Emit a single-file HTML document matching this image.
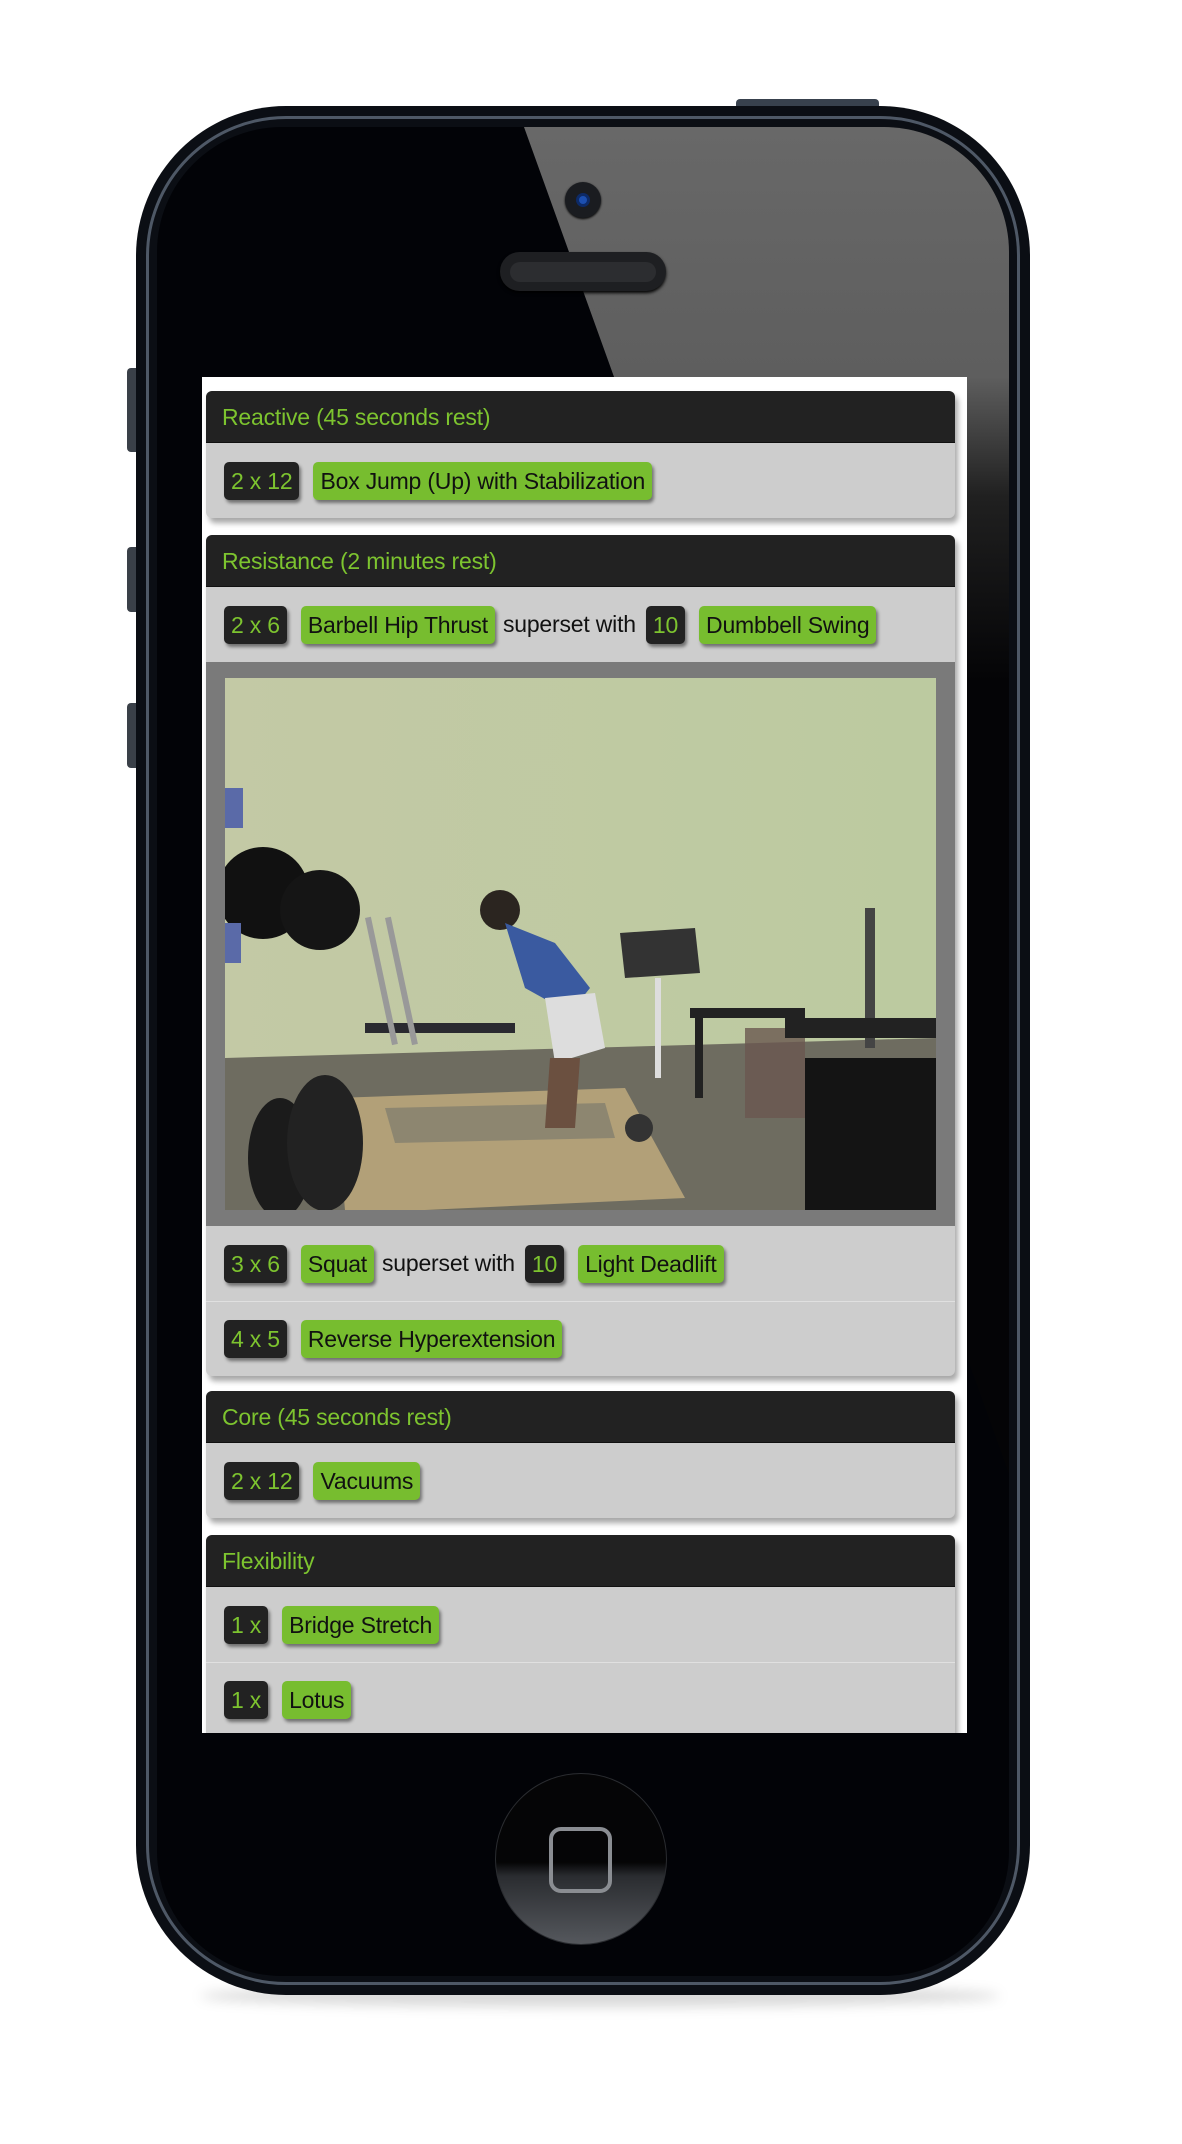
<!DOCTYPE html>
<html><head><meta charset="utf-8"><style>
*{margin:0;padding:0;box-sizing:border-box}
body{width:1182px;height:2144px;background:#fff;position:relative;overflow:hidden;font-family:"Liberation Sans",Arial,sans-serif}
.abs{position:absolute}
.card{position:absolute;left:206px;width:749px;background:#cdcdcd;border-radius:6px;box-shadow:3px 5px 6px rgba(0,0,0,.35);overflow:hidden}
.hd{height:52px;background:#222;color:#7dc42f;font-size:23px;line-height:52px;padding-left:16px;border-bottom:1px solid #111;letter-spacing:-0.2px}
.row{position:relative;height:75px;border-top:1px solid #e0e0e0;display:flex;align-items:center;padding-left:18px;font-size:23px;color:#111;letter-spacing:-0.2px}
.row.first{border-top:none}
.b{height:38px;line-height:38px;border-radius:5px;padding:0 7px;box-shadow:2px 3px 3px rgba(0,0,0,.45);margin-right:14px;white-space:nowrap}
.d{background:#222;color:#7dc42f}
.g{background:#77bd2f;color:#111}
.t{margin-right:10px;margin-left:-6px}
</style></head><body>
<div class="abs" style="left:127px;top:368px;width:12px;height:84px;background:#3a4048;border-radius:4px 0 0 4px"></div>
<div class="abs" style="left:127px;top:547px;width:12px;height:65px;background:#3a4048;border-radius:4px 0 0 4px"></div>
<div class="abs" style="left:127px;top:703px;width:12px;height:65px;background:#3a4048;border-radius:4px 0 0 4px"></div>
<div class="abs" style="left:736px;top:99px;width:143px;height:12px;background:#38414d;border-radius:4px 4px 0 0"></div>
<div class="abs" style="left:200px;top:1985px;width:800px;height:22px;border-radius:50%;background:rgba(0,0,0,.15);filter:blur(6px)"></div>
<div class="abs" style="left:136px;top:106px;width:894px;height:1889px;background:#0b0e14;border-radius:150px"></div>
<div class="abs" style="left:146px;top:116px;width:874px;height:1869px;border:3px solid #4e5866;border-radius:140px"></div>
<div class="abs" style="left:157px;top:127px;width:852px;height:1849px;background:#020307;border-radius:125px;overflow:hidden">
  <svg width="852" height="1849" style="position:absolute;left:0;top:0">
    <defs><linearGradient id="gg" x1="0" y1="0" x2="0" y2="1"><stop offset="0" stop-color="#686868"/><stop offset="0.135" stop-color="#5e5e5e"/><stop offset="0.2" stop-color="#202020"/><stop offset="0.3" stop-color="#040406"/></linearGradient></defs>
    <polygon points="367,0 852,0 852,1849 1033,1849" fill="url(#gg)"/>
  </svg>
</div>
<div class="abs" style="left:565px;top:182px;width:36px;height:36px;border-radius:50%;background:#1a1c20;box-shadow:0 1px 2px #000"></div>
<div class="abs" style="left:576px;top:193px;width:14px;height:14px;border-radius:50%;background:#1c4fb0;border:3px solid #0d2a66"></div>
<div class="abs" style="left:500px;top:252px;width:166px;height:39px;border-radius:20px;background:#1e1f22;box-shadow:0 2px 3px #000"></div>
<div class="abs" style="left:510px;top:262px;width:146px;height:20px;border-radius:10px;background:#2c2d30"></div>
<div class="abs" style="left:202px;top:377px;width:765px;height:1356px;background:#fff"></div>
<div class="abs" style="left:0;top:0;width:1182px;height:1733px;overflow:hidden;clip-path:inset(377px 215px 0 202px)">
<div class="card" style="top:391px">
  <div class="hd">Reactive (45 seconds rest)</div>
  <div class="row first"><span class="b d">2 x 12</span><span class="b g">Box Jump (Up) with Stabilization</span></div>
</div>
<div class="card" style="top:535px">
  <div class="hd">Resistance (2 minutes rest)</div>
  <div class="row first"><span class="b d">2 x 6</span><span class="b g">Barbell Hip Thrust</span><span class="t">superset with</span><span class="b d">10</span><span class="b g">Dumbbell Swing</span></div>
  <div style="height:564px;background:#7a7a7a;position:relative">
    <svg class="abs" style="left:19px;top:16px" width="711" height="532" viewBox="0 0 711 532">
      <defs><linearGradient id="w" x1="0" y1="0" x2="1" y2="0"><stop offset="0" stop-color="#c3c9a5"/><stop offset="1" stop-color="#bccaa0"/></linearGradient></defs>
      <rect width="711" height="532" fill="url(#w)"/>
      <polygon points="0,380 711,360 711,532 0,532" fill="#6e6c60"/>
      <polygon points="110,420 400,410 460,520 200,532 120,532" fill="#b2a078"/>
      <polygon points="160,430 380,425 390,460 170,465" fill="#8d8670"/>
      <rect x="140" y="345" width="150" height="10" fill="#2a2a30"/>
      <rect x="140" y="240" width="6" height="130" fill="#999" transform="rotate(-12 140 240)"/>
      <rect x="160" y="240" width="6" height="130" fill="#999" transform="rotate(-12 160 240)"/>
      <circle cx="38" cy="215" r="46" fill="#111"/>
      <circle cx="95" cy="232" r="40" fill="#151515"/>
      <rect x="0" y="110" width="18" height="40" fill="#5a6aa8"/>
      <rect x="0" y="245" width="16" height="40" fill="#5a6aa8"/>
      <ellipse cx="55" cy="480" rx="32" ry="60" fill="#1b1b1b"/>
      <ellipse cx="100" cy="465" rx="38" ry="68" fill="#222"/>
      <circle cx="275" cy="232" r="20" fill="#2b2520"/>
      <polygon points="280,245 330,265 365,310 345,335 300,310" fill="#3a5aa0"/>
      <polygon points="320,320 370,315 380,370 330,385" fill="#ddd"/>
      <polygon points="325,380 355,380 350,450 320,450" fill="#6b5040"/>
      <polygon points="395,255 470,250 475,295 400,300" fill="#333"/>
      <rect x="430" y="300" width="6" height="100" fill="#ddd"/>
      <rect x="465" y="330" width="115" height="10" fill="#222"/>
      <rect x="470" y="340" width="8" height="80" fill="#222"/>
      <rect x="520" y="350" width="60" height="90" fill="#6a5850" opacity=".8"/>
      <rect x="640" y="230" width="10" height="140" fill="#444"/>
      <rect x="560" y="340" width="151" height="20" fill="#222"/>
      <rect x="580" y="380" width="131" height="152" fill="#141414"/>
      <circle cx="414" cy="450" r="14" fill="#333"/>
    </svg>
  </div>
  <div class="row first"><span class="b d">3 x 6</span><span class="b g">Squat</span><span class="t">superset with</span><span class="b d">10</span><span class="b g">Light Deadlift</span></div>
  <div class="row"><span class="b d">4 x 5</span><span class="b g">Reverse Hyperextension</span></div>
</div>
<div class="card" style="top:1391px">
  <div class="hd">Core (45 seconds rest)</div>
  <div class="row first"><span class="b d">2 x 12</span><span class="b g">Vacuums</span></div>
</div>
<div class="card" style="top:1535px;height:260px">
  <div class="hd">Flexibility</div>
  <div class="row first"><span class="b d">1 x</span><span class="b g">Bridge Stretch</span></div>
  <div class="row"><span class="b d">1 x</span><span class="b g">Lotus</span></div>
</div>
</div>
<div class="abs" style="left:495px;top:1773px;width:172px;height:172px;border-radius:50%;background:linear-gradient(#050506 0%,#050506 52%,#2a2c30 60%,#55585d 100%);border:1px solid #2a2c30"></div>
<div class="abs" style="left:549px;top:1827px;width:63px;height:66px;border:4px solid #8a8d92;border-radius:12px"></div>
</body></html>
